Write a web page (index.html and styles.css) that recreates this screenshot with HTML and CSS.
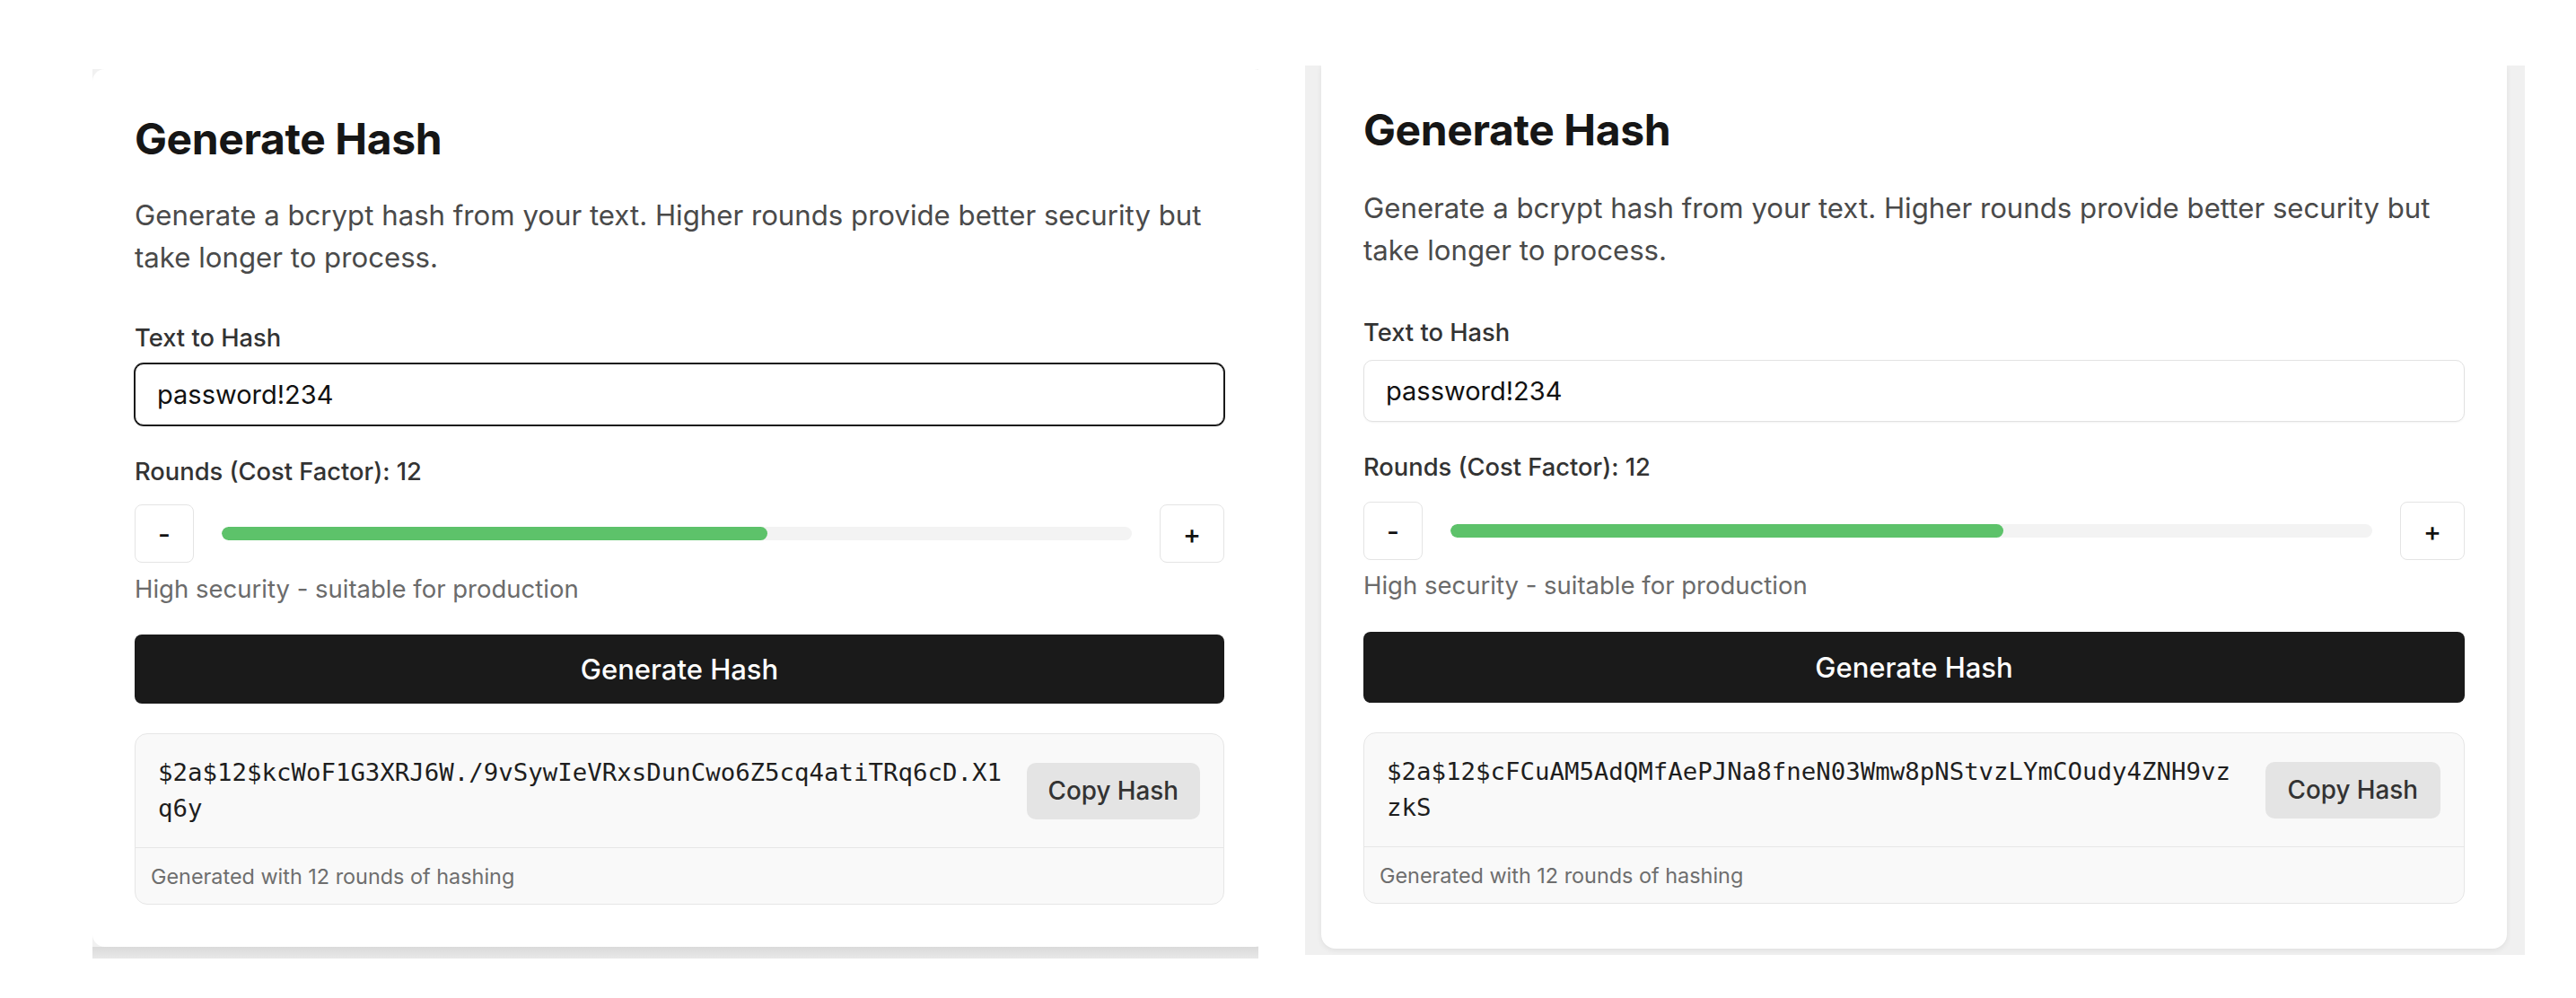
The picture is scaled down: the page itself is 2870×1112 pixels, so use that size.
FILE: index.html
```html
<!DOCTYPE html>
<html lang="en">
<head>
<meta charset="utf-8">
<title>Generate Hash</title>
<link rel="stylesheet" href="styles.css">
</head>
<body>
  <div class="shot shot--left">
    <section class="card card--a">
      <h2 class="title">Generate Hash</h2>
      <p class="desc">Generate a bcrypt hash from your text. Higher rounds provide better security but take longer to process.</p>
      <label class="label label--text">Text to Hash</label>
      <input class="field field--focus" type="text" value="password!234">
      <div class="label label--rounds">Rounds (Cost Factor): 12</div>
      <div class="controls">
        <button class="step">-</button>
        <div class="track"><div class="fill" style="width: 60%"></div></div>
        <button class="step">+</button>
      </div>
      <div class="hint">High security - suitable for production</div>
      <button class="generate">Generate Hash</button>
      <div class="result">
        <div class="result-main">
          <div class="hash">$2a$12$kcWoF1G3XRJ6W./9vSywIeVRxsDunCwo6Z5cq4atiTRq6cD.X1q6y</div>
          <button class="copy">Copy Hash</button>
        </div>
        <div class="result-foot">Generated with 12 rounds of hashing</div>
      </div>
    </section>
  </div>

  <div class="shot shot--right">
    <section class="card card--b">
      <h2 class="title">Generate Hash</h2>
      <p class="desc">Generate a bcrypt hash from your text. Higher rounds provide better security but take longer to process.</p>
      <label class="label label--text">Text to Hash</label>
      <input class="field" type="text" value="password!234">
      <div class="label label--rounds">Rounds (Cost Factor): 12</div>
      <div class="controls">
        <button class="step">-</button>
        <div class="track"><div class="fill" style="width: 60%"></div></div>
        <button class="step">+</button>
      </div>
      <div class="hint">High security - suitable for production</div>
      <button class="generate">Generate Hash</button>
      <div class="result">
        <div class="result-main">
          <div class="hash">$2a$12$cFCuAM5AdQMfAePJNa8fneN03Wmw8pNStvzLYmCOudy4ZNH9vzzkS</div>
          <button class="copy">Copy Hash</button>
        </div>
        <div class="result-foot">Generated with 12 rounds of hashing</div>
      </div>
    </section>
  </div>
</body>
</html>
```

FILE: styles.css
```css
* { box-sizing: border-box; }

html, body {
  margin: 0;
  background: #ffffff;
}

body {
  display: flex;
  align-items: flex-start;
  gap: 52px;
  padding: 73px 0 0 103px;
  font-family: Inter, "Noto Sans", sans-serif;
  color: #1a1a1a;
}

.shot {
  height: 991px;
  overflow: hidden;
  flex: none;
}

.shot--left {
  width: 1299px;
  margin-top: 4px;
  background: linear-gradient(to bottom, #f1f1f1 0, #f1f1f1 calc(100% - 13px), #dadada calc(100% - 13px), #e8e8e8 100%);
}

.shot--right {
  width: 1359px;
  height: 991px;
  background: #f0f0f0;
  padding: 0 20px 0 18px;
}

.card {
  background: #ffffff;
  display: flex;
  flex-direction: column;
}

.card--a {
  width: 1308px;
  border-radius: 14px;
  padding: 51px 47px 47px 47px;
}

.card--b {
  width: 1321px;
  border-radius: 0 0 16px 16px;
  padding: 45px 47px 50px 47px;
  box-shadow: 0 2px 6px rgba(0, 0, 0, 0.07);
}

.title {
  margin: 0;
  font-size: 48px;
  line-height: 54px;
  font-weight: 700;
  letter-spacing: -0.4px;
  color: #161616;
}

.desc {
  margin: 35px 0 0;
  font-size: 31.2px;
  line-height: 47px;
  color: #4a4a4a;
}

.label {
  display: block;
  font-size: 27.3px;
  line-height: 36px;
  font-weight: 500;
  color: #333333;
}

.label--text { margin-top: 48px; }
.label--rounds { margin-top: 34px; }

.field {
  display: block;
  width: 100%;
  height: 69px;
  margin: 10px 0 0;
  padding: 0 24px;
  border: 1px solid #e2e2e2;
  border-radius: 10px;
  font-family: Inter, "Noto Sans", sans-serif;
  font-size: 29px;
  color: #111111;
  background: #ffffff;
  outline: none;
  box-shadow: 0 1px 2px rgba(0, 0, 0, 0.05);
}

.field--focus {
  border-color: #1a1a1a;
  box-shadow: 0 0 0 1px #1a1a1a;
}

.controls {
  display: flex;
  align-items: center;
  gap: 31px;
  margin-top: 18px;
  height: 65px;
}

.step {
  height: 65px;
  padding: 0 25px;
  border: 1px solid #e4e4e4;
  border-radius: 8px;
  background: #ffffff;
  font-family: Inter, "Noto Sans", sans-serif;
  font-size: 30px;
  font-weight: 500;
  color: #111111;
  flex: none;
}

.track {
  flex: 1;
  height: 15px;
  border-radius: 8px;
  background: #f3f3f3;
  overflow: hidden;
}

.fill {
  height: 100%;
  border-radius: 8px;
  background: #5dc26a;
}

.hint {
  margin-top: 11px;
  font-size: 27.5px;
  line-height: 36px;
  color: #6b6b6b;
}

.generate {
  margin-top: 33px;
  height: 77px;
  width: 100%;
  border: none;
  border-radius: 8px;
  background: #1a1a1a;
  color: #ffffff;
  font-family: Inter, "Noto Sans", sans-serif;
  font-size: 31px;
  font-weight: 500;
}

.result {
  margin-top: 33px;
  border: 1px solid #e6e6e6;
  border-radius: 14px;
  background: #f9f9f9;
  overflow: hidden;
}

.result-main {
  display: flex;
  align-items: center;
  justify-content: space-between;
  gap: 20px;
  padding: 23px 26px 23px 25px;
}

.hash {
  flex: 1;
  max-width: 57.5ch;
  font-family: "DejaVu Sans Mono", "Liberation Mono", monospace;
  font-size: 27.4px;
  line-height: 40px;
  color: #1e1e1e;
  word-break: break-all;
}

.copy {
  flex: none;
  height: 63px;
  padding: 0 24px;
  border: none;
  border-radius: 10px;
  background: #e4e4e4;
  color: #333333;
  font-family: Inter, "Noto Sans", sans-serif;
  font-size: 27.8px;
  font-weight: 500;
}

.result-foot {
  border-top: 1px solid #e6e6e6;
  height: 63px;
  display: flex;
  align-items: center;
  padding: 0 17px;
  font-size: 23.4px;
  color: #6e6e6e;
}

/* second capture: slightly different spacing */
.card--b .desc { margin-top: 37px; }
.card--b .label--text { margin-top: 50px; }
.card--b .field { margin-top: 12px; }
.card--b .label--rounds { margin-top: 33px; }
.card--b .controls { margin-top: 20px; }
.card--b .hint { margin-top: 10px; }
.card--b .generate { margin-top: 34px; height: 79px; }
.card--b .copy { padding: 0 25px; }
```
